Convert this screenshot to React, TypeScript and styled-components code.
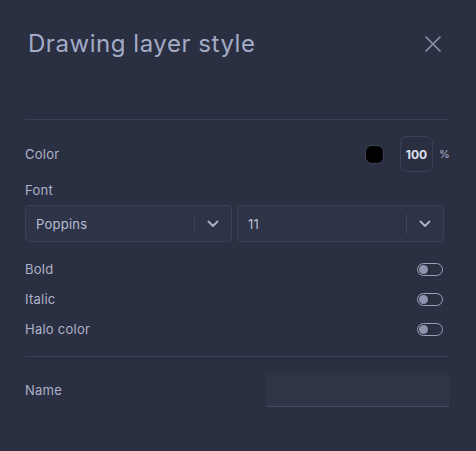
import React from "react";
import styled, { createGlobalStyle } from "styled-components";

const GlobalStyle = createGlobalStyle`
  html, body {
    margin: 0;
    padding: 0;
    background: #2a2f42;
  }
  * {
    box-sizing: border-box;
  }
`;

const Panel = styled.div`
  width: 476px;
  height: 451px;
  background: #2a2f42;
  font-family: Inter, "Noto Sans", sans-serif;
  color: #aab0c8;
  overflow: hidden;
`;

const Header = styled.div`
  display: flex;
  align-items: center;
  justify-content: space-between;
  height: 32px;
  margin-top: 28px;
  padding: 0 34px 0 28px;
`;

const Title = styled.h2`
  margin: 0;
  font-size: 24px;
  font-weight: 400;
  line-height: 32px;
  color: #a4abc6;
  letter-spacing: 0.55px;
`;

const CloseButton = styled.button`
  display: flex;
  align-items: center;
  justify-content: center;
  width: 18px;
  height: 18px;
  padding: 0;
  border: none;
  background: none;
  cursor: pointer;
`;

const Body = styled.div`
  padding: 0 27px 0 25px;
`;

const Divider = styled.div<{ $top: number }>`
  height: 1px;
  background: #3c4256;
  margin-top: ${(p) => p.$top}px;
`;

const Row = styled.div<{ $top: number; $height: number }>`
  display: flex;
  align-items: center;
  justify-content: space-between;
  height: ${(p) => p.$height}px;
  margin-top: ${(p) => p.$top}px;
`;

const Label = styled.span`
  font-size: 13px;
  line-height: 16px;
  color: #aeb3c9;
  letter-spacing: 0.25px;
`;

const FontLabel = styled(Label)`
  display: block;
  margin-top: 10px;
`;

const ColorControls = styled.div`
  display: flex;
  align-items: center;
`;

const Swatch = styled.div`
  width: 19px;
  height: 19px;
  border-radius: 7px;
  background: #000;
  border: 1px solid #3d4256;
  margin-right: 16px;
`;

const OpacityBox = styled.div`
  width: 33px;
  height: 36px;
  display: flex;
  align-items: center;
  justify-content: center;
  border: 1px solid #3b4156;
  border-radius: 7px;
  font-size: 12px;
  font-weight: 700;
  color: #dfe2ee;
`;

const Percent = styled.span`
  width: 10px;
  margin-left: 6px;
  font-size: 11px;
  color: #aab0c8;
  white-space: nowrap;
`;

const SelectGrid = styled.div`
  display: grid;
  grid-template-columns: 207px 207px;
  gap: 5px;
  margin-top: 7px;
`;

const Select = styled.div`
  display: flex;
  align-items: center;
  height: 37px;
  background: #2e3447;
  border: 1px solid #3a4055;
  border-radius: 4px;
  padding-left: 10px;
`;

const SelectValue = styled.span`
  flex: 1;
  font-size: 13px;
  color: #b8bdd2;
  letter-spacing: 0.25px;
`;

const SelectSep = styled.div`
  width: 1px;
  height: 20px;
  background: #3e445a;
`;

const ChevronBox = styled.div`
  width: 36px;
  display: flex;
  align-items: center;
  justify-content: center;
`;

const Toggle = styled.div`
  width: 26px;
  height: 13px;
  border: 1px solid #9ba1b8;
  border-radius: 7px;
  display: flex;
  align-items: center;
  padding-left: 1px;
  margin-right: 6px;
`;

const Knob = styled.div`
  width: 9px;
  height: 9px;
  border-radius: 50%;
  background: #8e94ad;
`;

const NameInput = styled.div`
  width: 183px;
  height: 34px;
  background: #2f3447;
  border-bottom: 1px solid #454b60;
`;

const Chevron = () => (
  <svg width="12" height="8" viewBox="0 0 12 8">
    <path
      d="M1.5 1.5 L6 6 L10.5 1.5"
      fill="none"
      stroke="#a8aec6"
      strokeWidth="2"
      strokeLinecap="round"
      strokeLinejoin="round"
    />
  </svg>
);

const toggles = ["Bold", "Italic", "Halo color"];

const App = () => {
  return (
    <Panel>
      <GlobalStyle />
      <Header>
        <Title>Drawing layer style</Title>
        <CloseButton aria-label="Close">
          <svg width="16" height="16" viewBox="0 0 16 16">
            <path
              d="M1 1 L15 15 M15 1 L1 15"
              stroke="#8c92aa"
              strokeWidth="1.6"
              strokeLinecap="round"
            />
          </svg>
        </CloseButton>
      </Header>

      <Body>
        <Divider $top={59} />

        {/* Colour + opacity */}
        <Row $top={16} $height={36}>
          <Label>Color</Label>
          <ColorControls>
            <Swatch />
            <OpacityBox>100</OpacityBox>
            <Percent>%</Percent>
          </ColorControls>
        </Row>

        {/* Font family and size */}
        <FontLabel>Font</FontLabel>
        <SelectGrid>
          <Select>
            <SelectValue>Poppins</SelectValue>
            <SelectSep />
            <ChevronBox>
              <Chevron />
            </ChevronBox>
          </Select>
          <Select>
            <SelectValue>11</SelectValue>
            <SelectSep />
            <ChevronBox>
              <Chevron />
            </ChevronBox>
          </Select>
        </SelectGrid>

        {/* Switches */}
        {toggles.map((name, i) => (
          <Row key={name} $top={i === 0 ? 12 : 0} $height={30}>
            <Label>{name}</Label>
            <Toggle>
              <Knob />
            </Toggle>
          </Row>
        ))}

        <Divider $top={12} />

        <Row $top={16} $height={34}>
          <Label>Name</Label>
          <NameInput />
        </Row>
      </Body>
    </Panel>
  );
};

export default App;
